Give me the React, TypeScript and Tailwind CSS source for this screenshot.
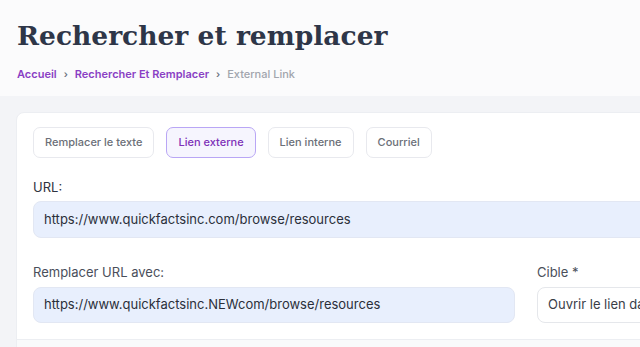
import React from "react";

const tabs = ["Remplacer le texte", "Lien externe", "Lien interne", "Courriel"];

export default function App() {
  return (
    <div className="w-[640px] h-[347px] overflow-hidden bg-[#f3f4f7]" style={{ fontFamily: "Inter, 'Liberation Sans', sans-serif" }}>
      <div className="bg-[#fbfbfc] h-[96px] pl-[17px] pt-[16px]">
        <h1 className="text-[26.5px] leading-[40px] font-bold text-[#2e3648]" style={{ fontFamily: "'DejaVu Serif', serif" }}>
          Rechercher et remplacer
        </h1>
        <div className="mt-[10px] flex items-center gap-[7px] text-[11px] font-semibold leading-[16px]">
          <span className="text-[#8a3fc4]">Accueil</span>
          <span className="text-[#6b7280] text-[10px]">›</span>
          <span className="text-[#8a3fc4]">Rechercher Et Remplacer</span>
          <span className="text-[#6b7280] text-[10px]">›</span>
          <span className="text-[#a1a5ad] font-medium">External Link</span>
        </div>
      </div>
      <div className="pl-[16px] pt-[16px]">
        <div className="w-[900px] bg-white rounded-tl-[8px] border border-[#eceef2] px-[16px] pt-[14px] pb-0">
          <div className="flex gap-[12px]">
            {tabs.map((t, i) => (
              <div
                key={t}
                className={
                  i === 1
                    ? "h-[31px] px-[11px] flex items-center rounded-[7px] border border-[#b9a6f5] bg-[#f6f5fe] text-[11px] font-medium text-[#7e31b8]"
                    : "h-[31px] px-[11px] flex items-center rounded-[7px] border border-[#e8e9ee] bg-white text-[11px] font-medium text-[#6b6f78]"
                }
              >
                {t}
              </div>
            ))}
          </div>
          <div className="mt-[20px] text-[13px] text-[#2f3340] leading-[18px]">URL:</div>
          <div className="mt-[5px] h-[37px] rounded-[8px] bg-[#e8effd] border border-[#e2e7f3] flex items-center pl-[10px] text-[13px] text-[#2b2f3a]">
            https://www.quickfactsinc.com/browse/resources
          </div>
          <div className="mt-[25px] flex gap-[22px]">
            <div className="w-[482px]">
              <div className="text-[13px] text-[#4a4f5b] leading-[18px]">Remplacer URL avec:</div>
              <div className="mt-[6px] h-[36px] rounded-[8px] bg-[#e8effd] border border-[#e2e7f3] flex items-center pl-[10px] text-[13px] text-[#2b2f3a]">
                https://www.quickfactsinc.NEWcom/browse/resources
              </div>
            </div>
            <div className="w-[340px]">
              <div className="text-[13px] text-[#4a4f5b] leading-[18px]">Cible *</div>
              <div className="mt-[6px] h-[36px] rounded-[8px] bg-white border border-[#e5e7eb] flex items-center pl-[10px] text-[13px] text-[#3a3e48] whitespace-nowrap">
                Ouvrir le lien dans un nouvel onglet
              </div>
            </div>
          </div>
          <div className="mt-[16px] -mx-[16px] h-[20px] border-t border-[#eceef2] bg-[#f9fafb]"></div>
        </div>
      </div>
    </div>
  );
}
